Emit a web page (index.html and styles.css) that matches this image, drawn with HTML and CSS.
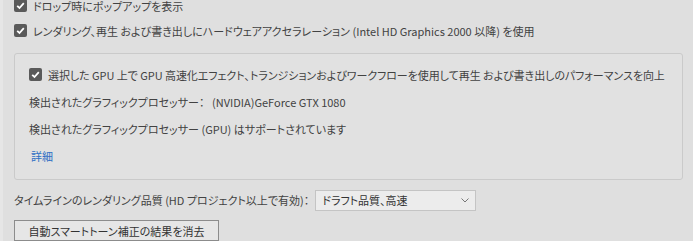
FILE: index.html
```html
<!DOCTYPE html>
<html lang="ja">
<head>
  <meta charset="UTF-8">
  <title>一般設定</title>
  <link rel="stylesheet" href="styles.css">
</head>
<body>

<div class="page">
  <label class="row">
    <span class="check"><svg viewBox="0 0 13 13"><path d="M3.2 6.8 L5.5 9 L9.8 4.2"/></svg></span>
    ドロップ時にポップアップを表示
  </label>
  <label class="row">
    <span class="check"><svg viewBox="0 0 13 13"><path d="M3.2 6.8 L5.5 9 L9.8 4.2"/></svg></span>
    レンダリング、再生 および書き出しにハードウェアアクセラレーション (Intel HD Graphics 2000 以降) を使用
  </label>

  <section class="panel">
    <label class="prow tight">
      <span class="check"><svg viewBox="0 0 13 13"><path d="M3.2 6.8 L5.5 9 L9.8 4.2"/></svg></span>
      選択した GPU 上で GPU 高速化エフェクト、トランジションおよびワークフローを使用して再生 および書き出しのパフォーマンスを向上
    </label>
    <div class="prow">
      <span class="key">検出されたグラフィックプロセッサー：</span>
      <span>(NVIDIA)GeForce GTX 1080</span>
    </div>
    <div class="prow">検出されたグラフィックプロセッサー (GPU) はサポートされています</div>
    <div class="prow"><a class="link" href="#">詳細</a></div>
  </section>

  <div class="qrow">
    <span>タイムラインのレンダリング品質 (HD プロジェクト以上で有効)：</span>
    <div class="select">
      <span>ドラフト品質、高速</span>
      <svg class="chev" viewBox="0 0 8 5"><path d="M0.5 0.5 L4 4 L7.5 0.5"/></svg>
    </div>
  </div>

  <button class="btn">自動スマートトーン補正の結果を消去</button>
</div>

</body>
</html>
```

FILE: styles.css
```css
* { box-sizing: border-box; }
body {
  margin: 0;
  background: #dfdfdf;
  color: #424242;
  font-family: "Noto Sans CJK JP", "Noto Sans", sans-serif;
  font-size: 11px;
  font-feature-settings: "palt";
  height: 241px;
  overflow: hidden;
  border-left: 3px solid #e6e6e6;
}
.page { margin-top: -7px; padding: 0 10px 0 11px; }
.row { display: flex; align-items: center; gap: 6px; height: 25px; white-space: nowrap; }
.check {
  width: 13px; height: 13px; background: #5a5a5a; border-radius: 2px; flex: none;
  display: flex;
}
.check svg { width: 13px; height: 13px; fill: none; stroke: #fff; stroke-width: 1.8; }
.panel {
  margin-top: 10px;
  border: 1px solid #cacaca;
  border-radius: 3px;
  background: #e1e1e1;
  padding: 7px 14px 10px 14px;
}
.prow { display: flex; align-items: center; gap: 6px; height: 27px; white-space: nowrap; }
.tight { letter-spacing: -0.05px; }
.key { width: 177px; }
.link { color: #2f6fc4; text-decoration: none; margin-left: 2px; }
.qrow { display: flex; align-items: center; gap: 4px; margin-top: 9px; height: 22px; }
.select {
  width: 161px; height: 21px; margin-left: 2px;
  border: 1px solid #c4c4c4; background: #ececec;
  display: flex; align-items: center; justify-content: space-between;
  padding: 0 6px 0 6px; color: #333;
}
.chev { width: 8px; height: 5px; fill: none; stroke: #777; stroke-width: 1; }
.btn {
  margin-top: 9px; width: 205px; height: 21px;
  font: inherit; color: #333;
  background: #e6e6e6; border: 1px solid #8c8c8c; border-radius: 0;
  padding: 0;
}
```
